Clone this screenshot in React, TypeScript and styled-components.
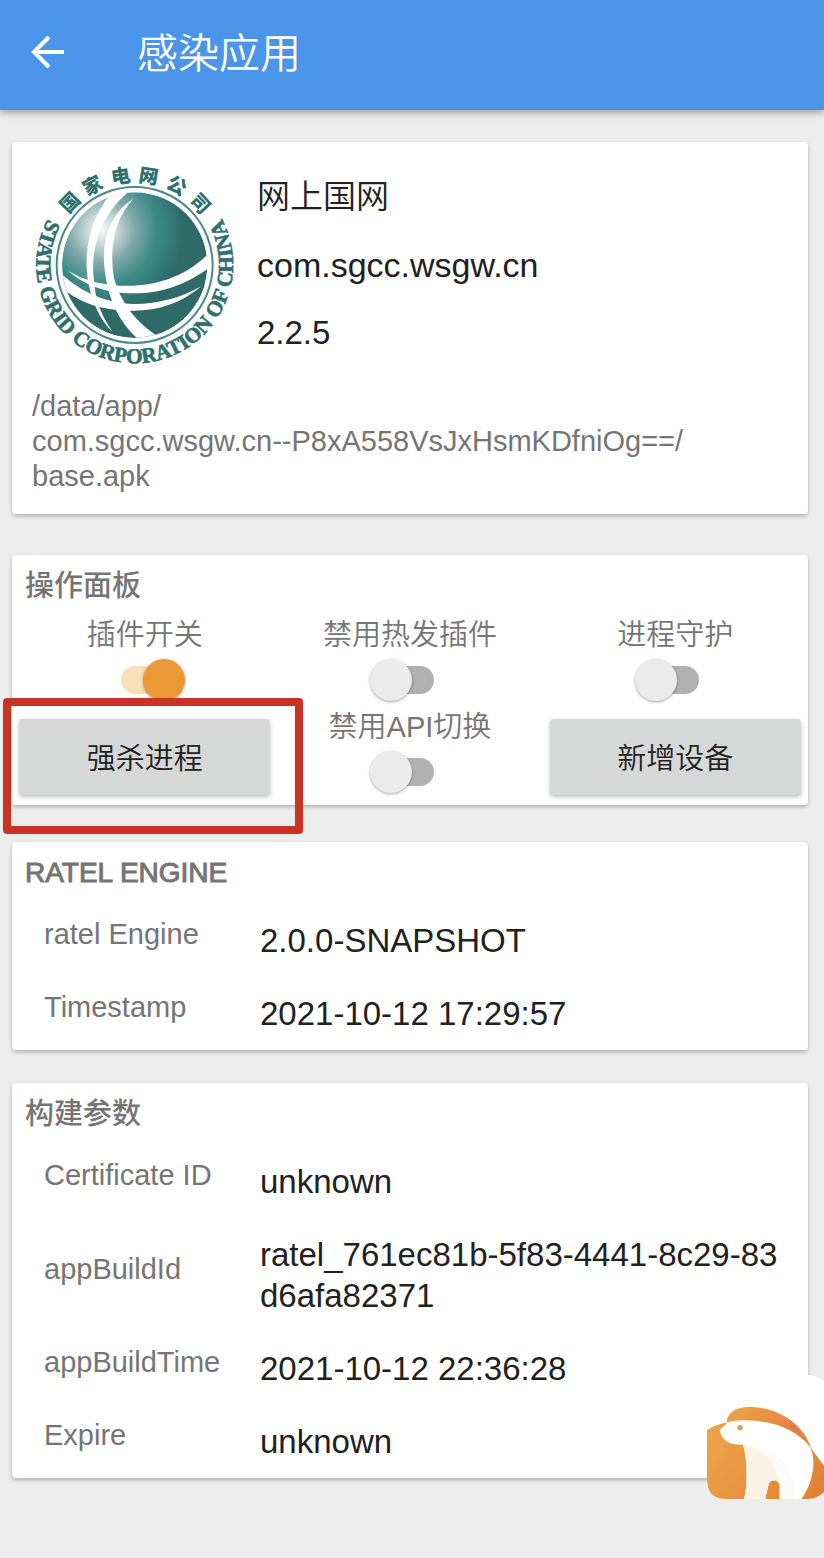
import React from "react";
import styled, { createGlobalStyle } from "styled-components";

const GlobalStyle = createGlobalStyle`
  * { box-sizing: border-box; }
  body {
    margin: 0;
    background: #ededed;
    color: #212121;
    font-family: "Liberation Sans", "Noto Sans CJK SC", sans-serif;
    font-weight: 350;
  }
  h1, h2, p, dl, dd { margin: 0; }
`;

const Page = styled.div`
  position: relative;
  min-height: 100vh;
  overflow: hidden;
`;

const AppBar = styled.header`
  display: flex;
  align-items: center;
  height: 110px;
  padding: 0 28px 2px;
  background: #4a95ea;
  box-shadow: 0 2px 8px rgba(0, 0, 0, 0.4);
`;

const BackButton = styled.button`
  display: flex;
  width: 40px;
  height: 40px;
  padding: 0;
  border: 0;
  background: none;
`;

const Title = styled.h1`
  margin-left: 69px;
  color: #fff;
  font-size: 41px;
  font-weight: 350;
  line-height: 56px;
`;

const Content = styled.main`
  display: flex;
  flex-direction: column;
  padding: 32px 16px 80px 12px;
`;

const Card = styled.section<{ $gap?: number }>`
  margin-bottom: ${(p) => p.$gap ?? 0}px;
  border-radius: 4px;
  background: #fff;
  box-shadow: 0 2px 4px rgba(0, 0, 0, 0.26);
`;

const AppCard = styled(Card)`
  padding: 17px 20px 20px;
`;

const AppSummary = styled.div`
  display: flex;
  align-items: flex-end;
  gap: 17px;
  margin-bottom: 22px;
`;

const AppFacts = styled.div`
  flex: 1;
`;

const Fact = styled.p<{ $size?: number }>`
  font-size: ${(p) => p.$size ?? 33}px;
  line-height: 68px;
`;

const ApkPath = styled.p`
  color: #757575;
  font-size: 29px;
  line-height: 35px;
`;

const SectionTitle = styled.h2<{ $latin?: boolean }>`
  padding: 12px 13px 0;
  color: #757575;
  font-size: ${(p) => (p.$latin ? 28 : 29)}px;
  font-weight: 500;
  line-height: 38px;
  -webkit-text-stroke: ${(p) => (p.$latin ? "1px #757575" : "0")};
`;

const Panel = styled.div`
  display: grid;
  grid-template-columns: repeat(3, 1fr);
  padding: 7px 0 9px;
`;

const Toggle = styled.label`
  display: flex;
  flex-direction: column;
  align-items: center;
  height: 92px;
  color: #757575;
  font-size: 29px;
  line-height: 46px;
`;

const Switch = styled.input`
  appearance: none;
  position: relative;
  width: 80px;
  height: 42px;
  margin: 1px 0 3px;

  &::before {
    content: "";
    position: absolute;
    inset: 7px 16px;
    border-radius: 14px;
    background: #b1b1b1;
  }
  &::after {
    content: "";
    position: absolute;
    top: 0;
    left: 0;
    width: 42px;
    height: 42px;
    border-radius: 50%;
    background: #ebebeb;
    box-shadow: 0 1px 3px rgba(0, 0, 0, 0.35);
  }
  &:checked::before { background: #f9e0b7; }
  &:checked::after {
    left: auto;
    right: 0;
    background: #eb9937;
  }
`;

const ActionCell = styled.div`
  position: relative;
  display: flex;
  padding: 15px 7px 1px;
`;

const ActionButton = styled.button`
  flex: 1;
  padding: 0 0 3px;
  border: 0;
  border-radius: 4px;
  background: #d6d8d7;
  box-shadow: 0 2px 4px rgba(0, 0, 0, 0.26);
  color: #212121;
  font-family: inherit;
  font-size: 29px;
  font-weight: 350;
`;

const Highlight = styled.div`
  position: absolute;
  inset: -6px -26px -38px -9px;
  border: 8px solid #ca3323;
  border-radius: 4px;
  pointer-events: none;
`;

const Details = styled.dl`
  padding: 12px 16px 0 32px;
`;

const Detail = styled.div`
  display: grid;
  grid-template-columns: 216px 1fr;
  align-items: center;
  padding: 16px 0;
  line-height: 41px;

  dt {
    padding-bottom: 12px;
    margin: -6px 0;
    color: #757575;
    font-size: 29px;
  }
  dd {
    font-size: 33px;
    word-break: break-all;
  }
`;

const Floating = styled.button`
  position: absolute;
  right: -6px;
  bottom: 59px;
  display: flex;
  width: 123px;
  height: 124px;
  padding: 0;
  overflow: hidden;
  border: 0;
  border-radius: 22px 22px 22px 0;
  background: none;
`;

const emblemChars = [
  { ch: "国", angle: -46 },
  { ch: "家", angle: -28 },
  { ch: "电", angle: -9 },
  { ch: "网", angle: 9 },
  { ch: "公", angle: 28 },
  { ch: "司", angle: 47 },
];

function GridEmblem() {
  return (
    <svg width="208" height="208" viewBox="36 27 624 624" role="img" aria-label="国家电网公司">
      <defs>
        <radialGradient id="globe" gradientUnits="userSpaceOnUse" cx="245" cy="240" r="330">
          <stop offset="0" stopColor="#f4f8f8" />
          <stop offset="0.12" stopColor="#cfdcdc" />
          <stop offset="0.3" stopColor="#7fa9a8" />
          <stop offset="0.5" stopColor="#3b8b88" />
          <stop offset="0.75" stopColor="#2e6b68" />
          <stop offset="1" stopColor="#2e6b68" />
        </radialGradient>
        <clipPath id="globeClip">
          <circle cx="344" cy="345" r="218" />
        </clipPath>
        <path id="motto" d="M102 176 A295 295 0 1 0 586 176" />
      </defs>
      <circle cx="344" cy="345" r="234" fill="none" stroke="#4b8987" strokeWidth="6" />
      <g clipPath="url(#globeClip)">
        <circle cx="344" cy="345" r="218" fill="url(#globe)" />
        <path d="M124 372C180 432 260 460 340 462C420 462 490 440 560 400V580H124Z" fill="#2e6b68" />
        <g fill="#fff">
          <path d="M274 128C215 200 192 290 202 380C212 450 240 510 278 546C245 500 225 450 221 385C212 290 240 200 322 128Z" />
          <path d="M340 146C270 190 243 270 254 360C264 450 300 520 355 568L408 556C340 510 300 450 282 385C268 300 280 210 340 146Z" />
          <path d="M145 362C200 398 280 410 340 407C430 403 510 370 570 306V352C500 404 420 432 340 430C260 430 190 405 145 362Z" />
          <path d="M118 366C180 426 260 460 340 462C420 462 490 440 545 408C480 462 410 484 330 482C250 480 190 462 140 425L118 430Z" />
        </g>
      </g>
      <g fill="#2e706d" fontFamily="'Noto Sans CJK SC', sans-serif" fontWeight="900" fontSize="58" textAnchor="middle">
        {emblemChars.map(({ ch, angle }) => (
          <text key={ch} x="344" y="96" transform={`rotate(${angle} 344 345)`}>
            {ch}
          </text>
        ))}
      </g>
      <text
        fill="#2e706d"
        stroke="#2e706d"
        strokeWidth="2"
        fontFamily="'Liberation Serif', serif"
        fontWeight="700"
        fontSize="64"
        textAnchor="middle"
      >
        <textPath href="#motto" startOffset="50%">
          STATE GRID CORPORATION OF CHINA
        </textPath>
      </text>
    </svg>
  );
}

function BearIcon() {
  return (
    <svg width="123" height="124" viewBox="81 47 369 372" aria-hidden="true">
      <defs>
        <linearGradient id="amber" gradientUnits="userSpaceOnUse" x1="90" y1="190" x2="420" y2="418">
          <stop offset="0" stopColor="#eda64a" />
          <stop offset="1" stopColor="#e27f35" />
        </linearGradient>
        <linearGradient id="cap" gradientUnits="userSpaceOnUse" x1="200" y1="140" x2="380" y2="260">
          <stop offset="0" stopColor="#eb9d44" />
          <stop offset="0.5" stopColor="#e98b45" />
          <stop offset="0.75" stopColor="#e57a48" />
          <stop offset="1" stopColor="#e98a3f" />
        </linearGradient>
      </defs>
      <rect x="81" y="47" width="369" height="372" fill="#fff" />
      <path d="M81 212C100 200 120 194 142 189L392 264C405 285 420 302 432 320L450 350V362Q450 419 394 419H137Q81 419 81 362Z" fill="url(#amber)" />
      <path d="M140 188C142 165 160 144 205 143C300 142 372 200 392 264C350 240 270 190 190 190Z" fill="url(#cap)" />
      <path d="M141 189C160 184 180 183 200 183C280 184 352 212 390 263C401 285 403 312 397 342C391 375 378 400 364 419H299V380Q297 364 282 363Q266 364 265 378C262 392 258 405 256 419H193C203 370 203 310 190 257C165 256 150 254 140 246C128 236 118 222 121 211C125 203 138 202 141 189Z" fill="#fff" />
      <path d="M190 257C290 265 345 310 344 419H299V380Q297 364 282 363Q266 364 265 378C262 392 258 405 256 419H193C203 370 203 310 190 257Z" fill="#fdfbf9" />
      <path d="M190 257C250 264 290 305 293 367Q289 363 282 363Q266 364 265 378C262 392 258 405 256 419H193C203 370 203 310 190 257Z" fill="#fcf3e8" />
      <circle cx="180" cy="205" r="8" fill="#e5974a" />
      <path d="M81 362Q81 419 137 419H81Z" fill="#ededed" />
    </svg>
  );
}

function ToggleField({ label, on = false }: { label: string; on?: boolean }) {
  return (
    <Toggle>
      {label}
      <Switch type="checkbox" role="switch" defaultChecked={on} />
    </Toggle>
  );
}

function DetailList({ items }: { items: [string, string][] }) {
  return (
    <Details>
      {items.map(([name, value]) => (
        <Detail key={name}>
          <dt>{name}</dt>
          <dd>{value}</dd>
        </Detail>
      ))}
    </Details>
  );
}

export default function App() {
  return (
    <Page>
      <GlobalStyle />
      <AppBar>
        <BackButton type="button" aria-label="返回">
          <svg width="40" height="40" viewBox="0 0 40 40" fill="none" stroke="#fff" strokeWidth="4">
            <path d="M36 18H6M21 3L6 18L21 33" />
          </svg>
        </BackButton>
        <Title>感染应用</Title>
      </AppBar>
      <Content>
        <AppCard $gap={41}>
          <AppSummary>
            <GridEmblem />
            <AppFacts>
              <Fact>网上国网</Fact>
              <Fact $size={34}>com.sgcc.wsgw.cn</Fact>
              <Fact>2.2.5</Fact>
            </AppFacts>
          </AppSummary>
          <ApkPath>
            /data/app/
            <br />
            com.sgcc.wsgw.cn--P8xA558VsJxHsmKDfniOg==/
            <br />
            base.apk
          </ApkPath>
        </AppCard>

        <Card $gap={37}>
          <SectionTitle>操作面板</SectionTitle>
          <Panel>
            <ToggleField label="插件开关" on />
            <ToggleField label="禁用热发插件" />
            <ToggleField label="进程守护" />
            <ActionCell>
              <ActionButton type="button">强杀进程</ActionButton>
              <Highlight />
            </ActionCell>
            <ToggleField label="禁用API切换" />
            <ActionCell>
              <ActionButton type="button">新增设备</ActionButton>
            </ActionCell>
          </Panel>
        </Card>

        <Card $gap={33}>
          <SectionTitle $latin>RATEL ENGINE</SectionTitle>
          <DetailList
            items={[
              ["ratel Engine", "2.0.0-SNAPSHOT"],
              ["Timestamp", "2021-10-12 17:29:57"],
            ]}
          />
        </Card>

        <Card>
          <SectionTitle>构建参数</SectionTitle>
          <DetailList
            items={[
              ["Certificate ID", "unknown"],
              ["appBuildId", "ratel_761ec81b-5f83-4441-8c29-83d6afa82371"],
              ["appBuildTime", "2021-10-12 22:36:28"],
              ["Expire", "unknown"],
            ]}
          />
        </Card>
      </Content>
      <Floating type="button" aria-label="Ratel">
        <BearIcon />
      </Floating>
    </Page>
  );
}
